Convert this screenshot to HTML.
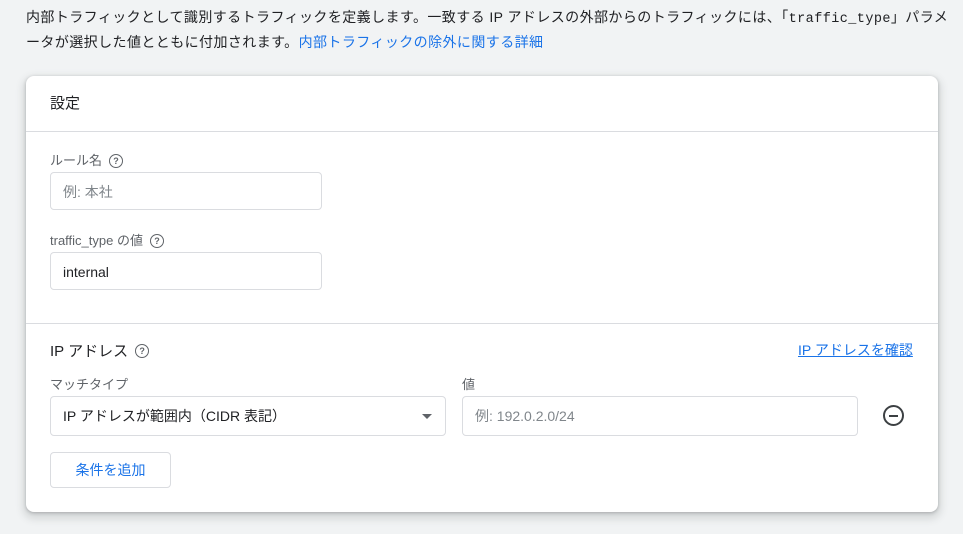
<!DOCTYPE html>
<html><head><meta charset="utf-8"><style>
body{margin:0;width:963px;height:534px;background:#f1f3f4;font-family:"Liberation Sans","Noto Sans CJK JP",sans-serif;color:#202124;overflow:hidden;position:relative}
.top{position:absolute;left:26px;top:6px;width:937px;font-size:14px;line-height:22px;color:#202124;white-space:nowrap;letter-spacing:0.42px}
.top a{color:#1a73e8;text-decoration:none}
.mono{font-family:"Liberation Mono",monospace;font-size:13.5px}
.card{position:absolute;left:26px;top:76px;width:912px;height:436px;background:#fff;border-radius:8px;box-shadow:0 1px 3px rgba(60,64,67,.3),0 4px 8px 3px rgba(60,64,67,.15)}
.abs{position:absolute}
.hr{position:absolute;left:0;width:912px;height:1px;background:#dadce0}
.lbl{font-size:13px;color:#5f6368}
.inp{position:absolute;border:1px solid #dadce0;border-radius:4px;height:38px;box-sizing:border-box;font-size:14px;line-height:38px;padding-left:12px}
.q{display:inline-block;width:12px;height:12px;border:1.5px solid #5f6368;border-radius:50%;font-size:9px;line-height:12px;text-align:center;color:#5f6368;font-weight:bold;vertical-align:middle;margin-left:7px;position:relative;top:-1px}
</style></head><body>
<div class="top">内部トラフィックとして識別するトラフィックを定義します。一致する IP アドレスの外部からのトラフィックには、「<span class="mono">traffic_type</span>」パラメ<br>ータが選択した値とともに付加されます。<a>内部トラフィックの除外に関する詳細</a></div>
<div class="card">
<div class="abs" style="left:24px;top:16px;font-size:15px">設定</div>
<div class="hr" style="top:55px"></div>
<div class="abs lbl" style="left:24px;top:74px">ルール名<span class="q">?</span></div>
<div class="inp" style="left:24px;top:96px;width:272px;color:#80868b">例: 本社</div>
<div class="abs lbl" style="left:24px;top:154px;color:#5f6368">traffic_type の値<span class="q">?</span></div>
<div class="inp" style="left:24px;top:176px;width:272px;color:#202124">internal</div>
<div class="hr" style="top:247px"></div>
<div class="abs" style="left:24px;top:264px;font-size:15px">IP アドレス<span class="q">?</span></div>
<div class="abs" style="left:772px;top:264px;font-size:14px;color:#1a73e8;text-decoration:underline">IP アドレスを確認</div>
<div class="abs lbl" style="left:24px;top:298px">マッチタイプ</div>
<div class="abs lbl" style="left:436px;top:298px">値</div>
<div class="inp" style="left:24px;top:320px;width:396px;height:40px;line-height:38px">IP アドレスが範囲内（CIDR 表記）<span class="abs" style="right:13px;top:17px;width:0;height:0;border-left:5px solid transparent;border-right:5px solid transparent;border-top:5px solid #5f6368"></span></div>
<div class="inp" style="left:436px;top:320px;width:396px;height:40px;color:#80868b">例: 192.0.2.0/24</div>
<div class="abs" style="left:857px;top:329px;width:17px;height:17px;border:2px solid #3c4043;border-radius:50%"><div class="abs" style="left:4px;top:7.5px;width:9px;height:2px;background:#3c4043"></div></div>
<div class="inp" style="left:24px;top:376px;width:121px;height:36px;line-height:34px;padding:0;text-align:center;color:#1a73e8">条件を追加</div>
</div>
</body></html>
